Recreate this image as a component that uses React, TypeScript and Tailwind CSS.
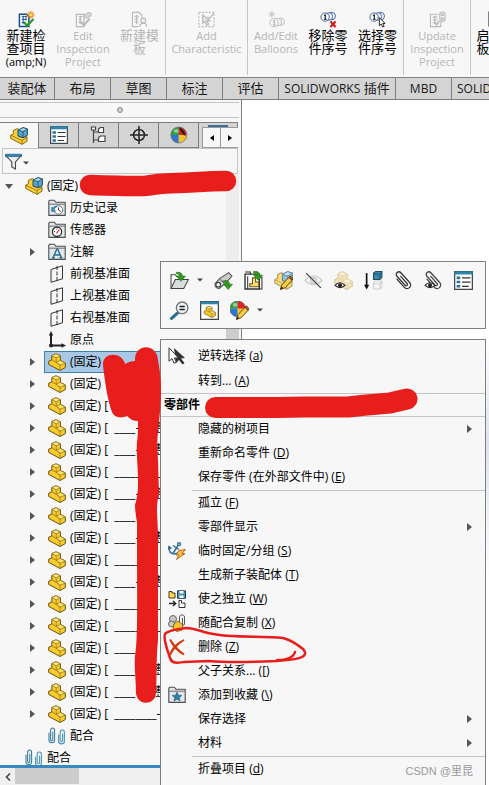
import { useState } from "react";
import type { ReactNode } from "react";
import clsx from "clsx";

interface IconProps {
  size?: number;
  className?: string;
  children: ReactNode;
}

function Icon({ size = 18, className, children }: IconProps) {
  return (
    <svg
      width={size}
      height={size}
      viewBox="0 0 18 18"
      fill="none"
      aria-hidden="true"
      className={clsx("shrink-0", className)}
    >
      {children}
    </svg>
  );
}

// Shared shapes

function PartShape({ fade = false }: { fade?: boolean }) {
  return (
    <g stroke={fade ? "#d9c7a4" : "#6b5212"} strokeWidth="1" strokeLinejoin="round">
      <path
        d="M3.8 2.6 8 .8l4.4 2v4.6L17.3 10v4.6L12 17.5.7 11.4V8.2l3.1-1.3Z"
        fill={fade ? "#f5e3b8" : "#f8cc2c"}
      />
      <g stroke={fade ? "#e0cfac" : "#9a771c"} strokeWidth=".8">
        <path d="M3.8 2.6 8 .8l4.4 2L8.2 4.8Z" fill={fade ? "#fbf1d8" : "#fdea8a"} />
        <path d="m8.2 9.2 4.2-1.8L17.3 10 12 12.4Z" fill={fade ? "#fbf1d8" : "#fde26a"} />
        <path d="M8.2 4.8v4.4l3.8 3.2v5M3.8 6.9 8 9.2" />
      </g>
    </g>
  );
}

function AssemblyShape() {
  return (
    <g strokeWidth="1" strokeLinejoin="round">
      <path
        d="M3.4 3.4 7.4 1.6 9 2.6v7l8 .2v4.4l-5 3.2L.7 11.4V8.2l2.7-1.4Z"
        fill="#f8ce35"
        stroke="#8a6a14"
      />
      <path d="M.7 8.2 12 13.6v3.8M12 13.6l5-3.2" stroke="#8a6a14" strokeWidth=".8" />
      <path d="m8 3.2 5-2.6 4.4 1.4v6.2L13 10.8 8 9Z" fill="#5aa3c9" stroke="#1f4d66" />
      <path d="m8 3.2 5-2.6 4.4 1.4L13 4.6Z" fill="#a9d9ef" stroke="#1f4d66" strokeWidth=".8" />
      <path d="M13 4.6v6.2" stroke="#1f4d66" strokeWidth=".8" />
    </g>
  );
}

function FolderShape({ children }: { children?: ReactNode }) {
  return (
    <>
      <path
        d="M.8 16.4V2.2l1-1h4.6l1.4 2h9.4v13.2Z"
        fill="#e3e6e8"
        stroke="#4b4f52"
        strokeWidth="1.1"
        strokeLinejoin="round"
      />
      <path d="M1.2 5.2h15.6" stroke="#4b4f52" strokeWidth=".8" />
      {children}
    </>
  );
}

function ListShape() {
  return (
    <>
      <rect x=".6" y=".6" width="16.8" height="16.8" fill="#fff" stroke="#3d4a52" strokeWidth="1.2" />
      <path d="M.4 1.8h17.2" stroke="#2e86ab" strokeWidth="3" />
      <path d="M2.5 6.5h3.4M2.5 10.5h3.4M2.5 14.5h3.4" stroke="#2b7294" strokeWidth="2.4" />
      <path d="M7.6 6.5h8M7.6 10.5h8M7.6 14.5h6.4" stroke="#333" strokeWidth="1.1" />
    </>
  );
}

function BallShape() {
  return (
    <>
      <circle cx="8.8" cy="9" r="8" fill="#eee" />
      <path d="M8.8 9V1A8 8 0 0 0 .8 9Z" fill="#2e9e3e" />
      <path d="M8.8 9V1a8 8 0 0 1 8 8Z" fill="#e02424" />
      <path d="M8.8 9H.8a8 8 0 0 0 8 8Z" fill="#2f74d0" />
      <path d="M8.8 9h8a8 8 0 0 1-8 8Z" fill="#f2c32b" />
      <circle cx="8.8" cy="9" r="8" stroke="#666" strokeWidth=".7" />
      <ellipse cx="6.2" cy="5" rx="2.4" ry="1.8" fill="#fff" opacity=".5" />
    </>
  );
}

function PencilShape() {
  return (
    <g stroke="#4c3210" strokeWidth=".8" strokeLinejoin="round">
      <path d="M6.2 17.4 7.6 13l6.6-7 3 2.8-6.6 7Z" fill="#f7ce46" />
      <path d="m14.2 6 1.4-1.4 2.2 2.6-.6 1.6Z" fill="#d9534a" />
      <path d="M6.2 17.4 7 15l1.6 1.4Z" fill="#222" />
    </g>
  );
}

function ClipShape({ stroke }: { stroke: string }) {
  return (
    <g transform="translate(9 9.5) rotate(-42)" stroke={stroke} strokeWidth="1.2" strokeLinecap="round">
      <path d="M-3.4-5.5V5a3.4 3.4 0 0 0 6.8 0V-7.5a2.5 2.5 0 0 0-5 0V4a1.2 1.2 0 0 0 2.6 0V-5" />
    </g>
  );
}

function MateShape() {
  return (
    <g strokeWidth="1.1" strokeLinecap="round">
      <path
        d="M1 6v7.2c0 3.2 5.6 3.2 5.6 0V3.4c0-3.2-4-3.2-4 0v9c0 1.6 2.2 1.6 2.2 0V5"
        stroke="#3d7f9f"
      />
      <path
        d="M10.6 8v6.2c0 3.6 5.8 3.6 5.8 0V5.6c0-3.4-4.2-3.4-4.2 0v8c0 1.6 2.4 1.6 2.4 0V7"
        stroke="#4a94b8"
      />
    </g>
  );
}

const GreenArrow = ({ x = 0, y = 0 }: { x?: number; y?: number }) => (
  <path
    transform={`translate(${x} ${y})`}
    d="M0 .4c3.6-.8 5.6.6 5.8 3.4H8.6L4.4 8.8 0 3.8h2.8C2.6 2.4 1.6 1.6 0 1.6Z"
    fill="#2f9a1c"
    stroke="#1f6a10"
    strokeWidth=".5"
  />
);

const Eye = () => (
  <>
    <path d="M1 13.6q4.5-5 9.4 0-4.8 4.2-9.4 0Z" fill="#fff" stroke="#222" strokeWidth="1.1" />
    <circle cx="5.7" cy="13.4" r="1.9" fill="#222" />
  </>
);

const Caret = ({ className }: { className?: string }) => (
  <svg width="6" height="4" viewBox="0 0 6 4" aria-hidden="true" className={className}>
    <path d="M0 .5h6L3 3.5Z" fill="#444" />
  </svg>
);

// Ribbon

const Rings = ({ stroke, ink }: { stroke: string; ink: string }) => (
  <>
    <circle cx="12.4" cy="5.4" r="4" fill="#f7f7f7" stroke={stroke} />
    <circle cx="9.4" cy="5.8" r="4" fill="#f7f7f7" stroke={stroke} />
    <circle cx="5.4" cy="6.4" r="4.4" fill="#f7f7f7" stroke={stroke} />
    <path d="m4.2 5 1.4-.8v4.6M4.2 8.8h2.8" stroke={ink} strokeWidth="1.1" />
  </>
);

const ribbonIcons = {
  newProject: (
    <>
      <path d="M1.5 3.5h8l2 3v10h-10Z" fill="#fff" stroke="#1c4c8c" strokeWidth="1.6" />
      <path d="M4 6h5M4 9h5M4 12h4M5.5 5v9M8.5 5v5" stroke="#1c4c8c" />
      <path d="m6.5 12 3 3.5 7-7" stroke="#2a9a2a" strokeWidth="2.4" />
      <path d="M13.5 0v8M9.5 4h8M10.7 1.2l5.6 5.6M16.3 1.2l-5.6 5.6" stroke="#ef7d1a" strokeWidth="1.3" />
      <circle cx="13.5" cy="4" r="1.7" fill="#ffe25a" />
    </>
  ),
  editProject: (
    <g stroke="#b9b9b9">
      <path d="M1.5 3.5h8v13h-8ZM4 6h4M4 9h3M4 12h4M5.5 5v9" strokeWidth="1.3" />
      <path d="m9 5 5-3.5 3.5 1-1 3-5 2.5Z" fill="#d6d6d6" />
      <path d="m6.5 11.5 3 3.5 6-7" strokeWidth="2.2" />
    </g>
  ),
  newTemplate: (
    <g stroke="#b9b9b9" strokeWidth="1.2">
      <path d="M8 16.5H1.5v-15h7l3 3V7M3.5 5.5h5M3.5 8.5h4M3.5 11.5h4M6 4v10" />
      <circle cx="13" cy="10" r="2.5" />
      <path d="M9.5 17c0-5.5 7-5.5 7 0" />
    </g>
  ),
  characteristic: (
    <g stroke="#b9b9b9" strokeWidth="1.2">
      <rect x="1" y="1.5" width="16" height="15" strokeDasharray="2 1.5" />
      <path d="M5 4v9l2.5-2 2 4 1.8-1-2-3.6h3.2Z" fill="#e6e6e6" />
      <path d="m10 6 2 2 5-6" />
    </g>
  ),
  balloons: (
    <>
      <g transform="translate(1 6)">
        <Rings stroke="#b9b9b9" ink="#a8a8a8" />
      </g>
      <path d="M4 0v7M.5 3.5h7M1.5 1l5 5M6.5 1l-5 5" stroke="#c4c4c4" />
    </>
  ),
  removeBalloon: (
    <>
      <Rings stroke="#3a5f9a" ink="#111" />
      <path d="m11 11 5.5 6M16.5 11 11 17" stroke="#d81313" strokeWidth="2.2" />
    </>
  ),
  selectBalloon: (
    <>
      <Rings stroke="#3a5f9a" ink="#111" />
      <path d="M11 7v8.5l2-1.7 1.5 3.2 1.5-.8-1.4-3h2.4Z" fill="#fff" stroke="#222" />
    </>
  ),
  updateProject: (
    <g stroke="#b9b9b9" strokeWidth="1.2">
      <path d="M10 3.5H1.5v13h11V12M4 6.5h5M4 9.5h5M4 12.5h3M6 5v9" />
      <rect x="11.5" y="1" width="5.5" height="10" rx="2.5" />
      <circle cx="14.2" cy="4" r="1" />
      <circle cx="14.2" cy="8" r="1" />
      <path d="m6 12 2 2.5 3-4" strokeWidth="1.8" />
    </g>
  ),
  launch: (
    <>
      <rect x="1" y="1" width="15" height="15" fill="#555" stroke="#222" />
      <path d="M4 5h9M4 9h9" stroke="#eee" />
    </>
  ),
};

interface RibbonItem {
  label?: string;
  latin?: string;
  icon: keyof typeof ribbonIcons;
  width: string;
  disabled?: boolean;
}

const ribbonGroups: RibbonItem[][] = [
  [
    { label: "新建检\n查项目\n", latin: "(amp;N)", icon: "newProject", width: "w-[52px]" },
    { latin: "Edit\nInspection\nProject", icon: "editProject", width: "w-[62px]", disabled: true },
    { label: "新建模\n板", icon: "newTemplate", width: "w-[51px]", disabled: true },
  ],
  [{ latin: "Add\nCharacteristic", icon: "characteristic", width: "w-[81px]", disabled: true }],
  [
    { latin: "Add/Edit\nBalloons", icon: "balloons", width: "w-[56px]", disabled: true },
    { label: "移除零\n件序号", icon: "removeBalloon", width: "w-[48px]" },
    { label: "选择零\n件序号", icon: "selectBalloon", width: "w-[51px]" },
  ],
  [{ latin: "Update\nInspection\nProject", icon: "updateProject", width: "w-[66px]", disabled: true }],
  [{ label: "启动模\n板编辑", icon: "launch", width: "w-[50px]" }],
];

function Ribbon() {
  return (
    <div className="flex h-[77px] shrink-0 overflow-hidden bg-[#f7f7f7] pb-[2px]">
      {ribbonGroups.map((group, i) => (
        <div key={i} className="flex shrink-0 border-r border-[#c6c6c6]">
          {group.map(item => (
            <button
              key={item.icon}
              type="button"
              disabled={item.disabled}
              className={clsx(
                "flex shrink-0 flex-col items-center gap-px pt-[11px] whitespace-pre",
                item.width,
                item.disabled ? "text-[#b5b5b5]" : "text-black"
              )}
            >
              <Icon size={17}>{ribbonIcons[item.icon]}</Icon>
              {item.label ? (
                <span className="text-[13px] leading-[13px]">
                  {item.label}
                  {item.latin && <span className="text-[11px]">{item.latin}</span>}
                </span>
              ) : (
                <span className="text-[11px] leading-[13px]">{item.latin}</span>
              )}
            </button>
          ))}
        </div>
      ))}
    </div>
  );
}

const commandTabs = [
  { label: "装配体", width: "w-[55px]" },
  { label: "布局", width: "w-[56px]" },
  { label: "草图", width: "w-[56px]" },
  { label: "标注", width: "w-[56px]" },
  { label: "评估", width: "w-[56px]" },
  { latin: "SOLIDWORKS", label: " 插件", width: "w-[117px]" },
  { latin: "MBD", label: "", width: "w-[56px]" },
  { latin: "SOLIDWORKS CAM", label: "", width: "w-[116px]" },
];

function CommandTabs() {
  return (
    <nav className="flex h-[23px] shrink-0 overflow-hidden border-y border-[#7f7f7f] bg-[#d4d4d4]">
      {commandTabs.map((tab, i) => (
        <button
          key={i}
          type="button"
          className={clsx(
            "shrink-0 border-r border-[#7f7f7f] text-[13px] whitespace-nowrap text-[#1a1a1a]",
            tab.width
          )}
        >
          {tab.latin && <span className="text-[12px]">{tab.latin}</span>}
          {tab.label}
        </button>
      ))}
    </nav>
  );
}

// Feature tree

const treeIcons = {
  assembly: <AssemblyShape />,
  part: <PartShape />,
  history: (
    <FolderShape>
      <circle cx="10.5" cy="11" r="4.2" fill="#fff" stroke="#666" strokeWidth=".9" />
      <path d="M10.5 8.5V11l2.2 1.5" stroke="#333" />
      <path d="M4 8v4h3.5M4.5 11.5C5 9 6.5 7.5 9 7.5" stroke="#2b7fae" strokeWidth="1.3" />
    </FolderShape>
  ),
  sensor: (
    <FolderShape>
      <circle cx="9" cy="10.8" r="4.6" fill="#fff" stroke="#222" strokeWidth="1.2" />
      <path d="m8.5 12.5 2.8-4" stroke="#d33" strokeWidth="1.3" />
      <path d="M6 10.5h1M9 7.5v1" stroke="#333" />
    </FolderShape>
  ),
  annotation: (
    <FolderShape>
      <path
        d="m5 14.8 3.7-8.6h1l3.7 8.6M6.6 12h5M3.8 14.8h3M11.4 14.8h3.2"
        stroke="#256d8f"
        strokeWidth="1.4"
      />
    </FolderShape>
  ),
  plane: (
    <g stroke="#333">
      <path d="M3 4.5 14.5.8v13L3 17.3Z" />
      <path d="M9 1v16" strokeDasharray="4 1.5" />
    </g>
  ),
  origin: (
    <>
      <path d="M3 3v11.5h11" stroke="#222" strokeWidth="2" />
      <path d="M3 0 .8 4.5h4.4ZM18 14.5l-4.5-2.2v4.4Z" fill="#222" />
      <circle cx="3" cy="14.5" r="2" fill="#222" />
    </>
  ),
  mates: <MateShape />,
};

interface TreeNode {
  label: string;
  icon: keyof typeof treeIcons;
  root?: boolean;
  expand?: "open" | "closed";
}

const treeNodes: TreeNode[] = [
  { label: "(固定)", icon: "assembly", root: true, expand: "open" },
  { label: "历史记录", icon: "history" },
  { label: "传感器", icon: "sensor" },
  { label: "注解", icon: "annotation", expand: "closed" },
  { label: "前视基准面", icon: "plane" },
  { label: "上视基准面", icon: "plane" },
  { label: "右视基准面", icon: "plane" },
  { label: "原点", icon: "origin" },
  { label: "(固定)", icon: "part", expand: "closed" },
  { label: "(固定)", icon: "part", expand: "closed" },
  { label: "(固定) [  ____-___整", icon: "part", expand: "closed" },
  { label: "(固定) [  ____-___整", icon: "part", expand: "closed" },
  { label: "(固定) [  ____-___整", icon: "part", expand: "closed" },
  { label: "(固定) [  _________", icon: "part", expand: "closed" },
  { label: "(固定) [  ____-___整", icon: "part", expand: "closed" },
  { label: "(固定) [  ____-___", icon: "part", expand: "closed" },
  { label: "(固定) [  ____-___整", icon: "part", expand: "closed" },
  { label: "(固定) [  _________", icon: "part", expand: "closed" },
  { label: "(固定) [  ____-___整", icon: "part", expand: "closed" },
  { label: "(固定) [  _________", icon: "part", expand: "closed" },
  { label: "(固定) [  _________", icon: "part", expand: "closed" },
  { label: "(固定) [  ____-___", icon: "part", expand: "closed" },
  { label: "(固定) [  ____-___整", icon: "part", expand: "closed" },
  { label: "(固定) [  ____-___整", icon: "part", expand: "closed" },
  { label: "(固定) [  ________-", icon: "part", expand: "closed" },
  { label: "配合", icon: "mates" },
  { label: "配合", icon: "mates", root: true },
];

function FeatureTree() {
  const [selected, setSelected] = useState(8);

  return (
    <div className="flex min-h-0 flex-1 overflow-hidden">
      <ul className="min-w-0 flex-1">
        {treeNodes.map((node, i) => (
          <li key={i} className={clsx("flex h-[22px] items-center", node.root ? "pl-[3px]" : "pl-[26px]")}>
            <span className="flex w-3 shrink-0 justify-center">
              {node.expand === "open" && (
                <svg width="8" height="5" viewBox="0 0 8 5" aria-hidden="true">
                  <path d="M0 0h8L4 5Z" fill="#555" />
                </svg>
              )}
              {node.expand === "closed" && (
                <svg width="5" height="8" viewBox="0 0 5 8" aria-hidden="true">
                  <path d="M0 0v8l5-4Z" fill="#555" />
                </svg>
              )}
            </span>
            <button
              type="button"
              onClick={() => setSelected(i)}
              className={clsx(
                "ml-[6px] flex h-[22px] min-w-0 flex-1 items-center gap-1 overflow-hidden border pl-[3px] whitespace-pre",
                selected === i ? "border-[#3c7fb1] bg-[#a9c8e6]" : "border-transparent"
              )}
            >
              <Icon>{treeIcons[node.icon]}</Icon>
              {node.label}
            </button>
          </li>
        ))}
      </ul>
      <div className="mr-[2px] flex w-[13px] shrink-0 flex-col bg-[#ededed] pt-[110px]">
        <div className="h-[440px] bg-[#cdcdcd]" />
      </div>
    </div>
  );
}

const panelTabs = [
  { name: "FeatureManager", icon: <AssemblyShape /> },
  { name: "PropertyManager", icon: <ListShape /> },
  {
    name: "ConfigurationManager",
    icon: (
      <g stroke="#444" strokeWidth="1.2">
        <path d="M3.5 2v15M3.5 6h6M3.5 14h6" />
        <path d="M1.5 1h4v3h-4ZM8.5 3l2-1.5h3v5h-5ZM8.5 11.5l2-1.5h4.5v5.5H8.5Z" fill="#fff" />
      </g>
    ),
  },
  {
    name: "DimXpertManager",
    icon: (
      <g stroke="#222" strokeWidth="1.5">
        <circle cx="9" cy="9" r="5.5" />
        <path d="M9 0v18M0 9h18" />
      </g>
    ),
  },
  {
    name: "DisplayManager",
    icon: (
      <>
        <BallShape />
        <path d="M9 1.5c4 1.5 6 4 6.5 8.5-2-1-5-4-6.5-8.5Z" fill="#222" />
      </>
    ),
  },
];

function SidePanel() {
  return (
    <aside className="flex w-[242px] shrink-0 flex-col border-r border-[#7f7f7f] bg-[#f7f7f7]">
      <div className="mt-[2px] mr-[2px] mb-1 flex h-4 shrink-0 items-center justify-center border-y border-[#c4c4c4]">
        <span className="size-[6px] rounded-full border border-[#8a8a8a] bg-[#d0d0d0]" />
      </div>

      <div className="relative mr-[3px] flex h-[26px] shrink-0 border-t border-[#7f7f7f]">
        {panelTabs.map((tab, i) => (
          <button
            key={tab.name}
            type="button"
            aria-label={tab.name}
            className={clsx(
              "flex shrink-0 items-center justify-center border-r border-[#7f7f7f]",
              i === 0 ? "w-[39px] bg-[#f7f7f7]" : "w-10 border-b bg-[#d4d4d4]"
            )}
          >
            <Icon>{tab.icon}</Icon>
          </button>
        ))}
        <button
          type="button"
          aria-label="CAM"
          className="flex min-w-0 flex-1 justify-center border-r border-[#7f7f7f] bg-[#d4d4d4] pt-[2px]"
        >
          <span className="h-3 w-5 bg-[#3d6f94]" />
        </button>
        <div className="absolute right-0 bottom-0 flex h-[21px] w-9">
          {["M5 0v6L1 3Z", "M1 0v6l4-3Z"].map((d, i) => (
            <button
              key={d}
              type="button"
              aria-label={i === 0 ? "Scroll left" : "Scroll right"}
              className="flex flex-1 items-center justify-center border-y border-l border-[#9a9a9a] bg-[#f7f7f7]"
            >
              <svg width="6" height="6" viewBox="0 0 6 6" aria-hidden="true">
                <path d={d} fill="#000" />
              </svg>
            </button>
          ))}
        </div>
      </div>

      <div className="mr-[3px] mb-px ml-[2px] flex h-[26px] shrink-0 items-center border border-[#c4c4c4]">
        <button type="button" aria-label="Filter" className="flex items-center pl-[2px]">
          <Icon>
            <path d="M.8 3.5h15.4L10.5 10v7l-3.7-2v-5Z" fill="#e9edf0" stroke="#444" strokeWidth="1.1" />
            <path d="M.5 2.2h16v2.4H.5Z" fill="#2b86ad" stroke="#1d5b77" strokeWidth=".6" />
          </Icon>
          <Caret className="mt-1" />
        </button>
        <input aria-label="Filter tree" className="min-w-0 flex-1 bg-transparent px-1 outline-none" />
      </div>

      <FeatureTree />

      <div className="h-[3px] shrink-0 bg-[#3a88c0]" />
      <div className="flex h-[17px] shrink-0 bg-[#f0f0f0]">
        <button type="button" aria-label="Scroll tree left" className="flex w-[15px] items-center justify-center">
          <svg width="6" height="8" viewBox="0 0 6 8" fill="none" aria-hidden="true">
            <path d="M5 .5 1.5 4 5 7.5" stroke="#444" strokeWidth="1.6" />
          </svg>
        </button>
        <div className="h-4 w-16 bg-[#cdcdcd]" />
      </div>
    </aside>
  );
}

// Context toolbar and menu

const OpenFolder = () => (
  <>
    <path d="M1 16.5v-13h4l1.5 2H12v3" fill="#fff" stroke="#444" />
    <path d="m1 16.5 4-8.5h12.5l-4.5 8.5Z" fill="#d9dcde" stroke="#444" />
    <GreenArrow x={6} y={1} />
  </>
);

interface Tool {
  name: string;
  icon: ReactNode;
  dropdown?: boolean;
}

const tools: Tool[] = [
  { name: "打开零件", icon: <OpenFolder />, dropdown: true },
  {
    name: "预览窗口",
    icon: (
      <>
        <path d="m1 12 4.5-5L14 1.5 17 5l-6.5 7L5 16.5c-2.5.5-4.5-2-4-4.5Z" fill="#c9cccf" stroke="#555" />
        <circle cx="4" cy="13" r="2.2" fill="#f4f4f4" stroke="#444" />
        <path d="m6 8 4 4" stroke="#666" />
        <GreenArrow x={9} y={8.8} />
      </>
    ),
  },
  {
    name: "替换零部件",
    icon: (
      <>
        <path d="M1 3h13.5v14H1Z" fill="#fff" stroke="#333" strokeWidth="1.3" />
        <path d="M1 1h5v2M14.5 6H17v11h-3M3.5 5v12" stroke="#333" />
        <path d="M8 6.5h3v4h3v4.5H5.5v-3H8Z" fill="#f8dc74" stroke="#6b5418" />
        <GreenArrow x={9} y={0} />
      </>
    ),
  },
  {
    name: "编辑零件",
    icon: (
      <>
        <g opacity=".65">
          <AssemblyShape />
        </g>
        <PencilShape />
      </>
    ),
  },
  {
    name: "隐藏零部件",
    icon: (
      <>
        <path d="M1 9q8-9 16 0-8 8-16 0Z" stroke="#c9c9c9" strokeWidth="1.1" />
        <circle cx="9" cy="9" r="3" fill="#dcdcdc" stroke="#c9c9c9" />
        <path d="m2 2 14 14" stroke="#444" strokeWidth="1.2" />
      </>
    ),
  },
  {
    name: "更改透明度",
    icon: (
      <>
        <PartShape fade />
        <Eye />
      </>
    ),
  },
  {
    name: "压缩",
    icon: (
      <>
        <path d="M2.5 2v12" stroke="#111" strokeWidth="1.6" />
        <path d="M2.5 17.5 0 13h5Z" fill="#111" />
        <path d="m9 2 2-1.5h6V6l-2 2H9Z" fill="#3a86ab" stroke="#1f4d66" />
        <path d="M9 3h6v5M15 3l2-2" stroke="#1f4d66" strokeWidth=".8" />
        <path d="m9 11 2-1.5h6V15l-2 2H9ZM9 12h6v5M15 12l2-2" stroke="#cfcfcf" />
      </>
    ),
  },
  { name: "配合", icon: <ClipShape stroke="#333" /> },
  {
    name: "查看配合",
    icon: (
      <>
        <ClipShape stroke="#444" />
        <Eye />
      </>
    ),
  },
  { name: "零部件属性", icon: <ListShape /> },
  {
    name: "放大所选范围",
    icon: (
      <>
        <path d="m1.5 16.5 5.5-5" stroke="#2b6f93" strokeWidth="3" strokeLinecap="round" />
        <circle cx="11.5" cy="6.5" r="5.5" fill="#eef2f4" stroke="#777" strokeWidth="1.3" />
        <path d="M9 5.2h5M9 8h5" stroke="#222" strokeWidth="1.5" />
      </>
    ),
  },
  {
    name: "零部件预览",
    icon: (
      <>
        <rect x=".6" y=".6" width="16.8" height="16.8" fill="#fff" stroke="#444" strokeWidth="1.2" />
        <path d="M.4 1.8h17.2" stroke="#2e86ab" strokeWidth="2.6" />
        <g transform="translate(3.5 4.5) scale(.64)">
          <PartShape />
        </g>
      </>
    ),
  },
  {
    name: "外观",
    icon: (
      <>
        <g transform="translate(-1 -1) scale(.94)">
          <BallShape />
        </g>
        <PencilShape />
      </>
    ),
    dropdown: true,
  },
];

function ContextToolbar() {
  return (
    <div className="flex flex-wrap border border-[#7f7f7f] bg-[#f7f7f7] p-[3px]">
      {tools.map(tool => (
        <button
          key={tool.name}
          type="button"
          aria-label={tool.name}
          className={clsx("flex h-[30px] items-center pl-[6px]", tool.dropdown ? "w-11 gap-2" : "w-[30px]")}
        >
          <Icon size={19}>{tool.icon}</Icon>
          {tool.dropdown && <Caret />}
        </button>
      ))}
    </div>
  );
}

const menuIcons = {
  cursor: (
    <>
      <path d="m6 1 11 10-4 .5 3.5 4.5-2 1.5L11 13l-3 3Z" fill="#333" />
      <path d="M1 .8v13.4l3-2.6 2 4.6 2.4-1L6.3 11h4.2Z" fill="#fff" stroke="#333" />
    </>
  ),
  anchor: (
    <>
      <g stroke="#2c7396" strokeWidth="1.5">
        <circle cx="11" cy="2.2" r="1.4" />
        <path d="m10 3.5-5 8M5 3.5l6 4M1 5.5c0 4 1.5 6 5 6.5 2.5 0 3.5-.5 5-2M0 7.5l1-3 2.5 2" />
      </g>
      <path d="m11 8.5 6.5-1-3.5 4h3l-8.5 6 2.5-4.5H8Z" fill="#f9c440" stroke="#b5551a" strokeWidth=".9" />
    </>
  ),
  independent: (
    <>
      <path d="M1 1.5h3V3h3v5H1Z" fill="#f8d95c" stroke="#4a3b10" />
      <path d="M9.5.8h8v7.5h-8Z" fill="#4b8fb3" stroke="#1f3d50" />
      <path d="M11.5 1h4v2.5h-4ZM11.5 5.5h4V8h-4Z" fill="#fff" />
      <path d="M1 13.5h6M5 11l2.8 2.5L5 16" stroke="#222" strokeWidth="1.3" />
      <path d="M11 10.5h2.5V13H17v4.5h-6Z" fill="#fff" stroke="#333" />
    </>
  ),
  copyMates: (
    <>
      <circle cx="5" cy="5" r="3.5" fill="#c9c9c9" stroke="#666" />
      <circle cx="3.5" cy="10" r="3" fill="#c9c9c9" stroke="#666" />
      <path d="m6 10 4-3 5 4-1 5-5 1.5-4-3Z" fill="#f3c52f" stroke="#8a6a14" />
      <path d="M11.5 8V3c0-2.8 5-2.8 5 0v7c0 1.5-2 1.5-2 0V4" stroke="#555" />
    </>
  ),
  remove: (
    <path
      d="M2 1.5c3 6 8 12 14 15-6-4-10-9-14-15ZM16 2C9 5 4 10 2 17c3-6 7-11 14-15Z"
      fill="#d9380f"
      stroke="#d9380f"
      strokeWidth="1.8"
    />
  ),
  favorite: (
    <FolderShape>
      <path
        d="m9 6 1.4 3.2 3.4.3-2.6 2.2.8 3.3-3-1.8L6 15l.8-3.3-2.6-2.2 3.4-.3Z"
        fill="#2f7fa8"
        stroke="#1e5673"
        strokeWidth=".6"
      />
    </FolderShape>
  ),
};

interface MenuItem {
  label?: string;
  accessKey?: string;
  icon?: keyof typeof menuIcons;
  submenu?: boolean;
  kind?: "header" | "separator";
}

const menuItems: MenuItem[] = [
  { label: "逆转选择", accessKey: "a", icon: "cursor" },
  { label: "转到...", accessKey: "A" },
  { label: "零部件", kind: "header" },
  { label: "隐藏的树项目", submenu: true },
  { label: "重新命名零件", accessKey: "D" },
  { label: "保存零件 (在外部文件中)", accessKey: "E" },
  { kind: "separator" },
  { label: "孤立", accessKey: "F" },
  { label: "零部件显示", submenu: true },
  { label: "临时固定/分组", accessKey: "S", icon: "anchor" },
  { label: "生成新子装配体", accessKey: "T" },
  { label: "使之独立", accessKey: "W", icon: "independent" },
  { label: "随配合复制", accessKey: "X", icon: "copyMates" },
  { label: "删除", accessKey: "Z", icon: "remove" },
  { label: "父子关系...", accessKey: "[" },
  { label: "添加到收藏", accessKey: "\\", icon: "favorite" },
  { label: "保存选择", submenu: true },
  { label: "材料", submenu: true },
  { kind: "separator" },
  { label: "折叠项目", accessKey: "d" },
];

function ContextMenu() {
  return (
    <div className="flex flex-1 flex-col border border-b-0 border-[#7f7f7f] bg-[#f7f7f7] pt-[3px]">
      {menuItems.map((item, i) => {
        if (item.kind === "separator") {
          return <hr key={i} className="mt-px ml-[31px] border-t border-[#c4c4c4]" />;
        }
        if (item.kind === "header") {
          return (
            <div key={i} className="h-6 shrink-0 border-y border-[#c4c4c4] pl-[3px] leading-[22px] font-bold">
              {item.label}
            </div>
          );
        }
        return (
          <button
            key={i}
            type="button"
            className={clsx("flex shrink-0 items-center pl-[7px] text-left", i < 2 ? "h-[25px]" : "h-6")}
          >
            <span className="w-[30px] shrink-0">
              {item.icon && <Icon>{menuIcons[item.icon]}</Icon>}
            </span>
            <span className="flex-1">
              {item.label}
              {item.accessKey && (
                <>
                  {" "}(<u>{item.accessKey}</u>)
                </>
              )}
            </span>
            {item.submenu && (
              <svg width="5" height="8" viewBox="0 0 5 8" aria-hidden="true" className="mr-[13px]">
                <path d="M0 0v8l5-4Z" fill="#555" />
              </svg>
            )}
          </button>
        );
      })}
    </div>
  );
}

// Red pen marks drawn over the window
function PenMarks() {
  return (
    <svg
      width="489"
      height="785"
      viewBox="0 0 489 785"
      fill="none"
      stroke="#e81e1c"
      strokeLinecap="round"
      strokeLinejoin="round"
      aria-hidden="true"
      className="pointer-events-none absolute top-0 left-0"
    >
      <path d="M90 185c20 .5 38 1 54 1 10-.5 8-2 22-2.5 22-.5 40-2.5 60-2.5" strokeWidth="20.5" />
      <path d="M215.5 407.5H276l30-.5h42c16-2 30-3 42-4l17-4" strokeWidth="21" />
      <path
        d="M103 365C102 352 122 351 125 364C128 362 132 361 135 361C134 343 157 343 158 360C160 372 161 380 161 390C161 402 160 412 159 422C157 440 157 446 158 460L159 495C157 500 157 507 157 512L158 533V640C156 660 157 675 156 693C155 706 137 706 136 693C136 680 134 668 135 656C138 640 137 600 137 523C136 515 135 510 135 505C138 495 138 490 138 480C138 466 136 452 137 442C138 436 138 428 138 421C133 421 130 419 127 416C120 419 114 417 112 412C108 402 105 384 103 365Z"
        fill="#e81e1c"
        stroke="none"
      />
      <path
        d="M208 633c-8-2-14-5-22-5-8 1-19 3-21 6-2 5 2 15 5 24 2 6 7 5 14 4l25-1c22 2 45 1 67 0 12-1 20-1 26-4 4-2 4-5 1-8-6-5-13-9-20-11-20-3-50 1-75-5ZM277 660c8 0 16-1 18-8"
        strokeWidth="2.5"
      />
    </svg>
  );
}

export default function App() {
  return (
    <div className="relative flex h-screen flex-col overflow-hidden bg-white font-['Open_Sans','Noto_Sans_CJK_SC',sans-serif] text-[12px] text-black">
      <Ribbon />
      <CommandTabs />
      <main className="flex min-h-0 flex-1">
        <SidePanel />
        <div className="flex-1 bg-linear-to-b from-white from-35% via-[#dfe3f0] via-50% to-white to-70%" />
      </main>

      <div className="absolute top-[261px] right-[3px] bottom-0 left-40 flex flex-col gap-[10px]">
        <ContextToolbar />
        <ContextMenu />
      </div>

      <PenMarks />
      <p className="absolute right-4 bottom-[6px] font-['Liberation_Sans','Noto_Sans_CJK_SC',sans-serif] text-[11px] text-[#999]">
        CSDN @里昆
      </p>
    </div>
  );
}
